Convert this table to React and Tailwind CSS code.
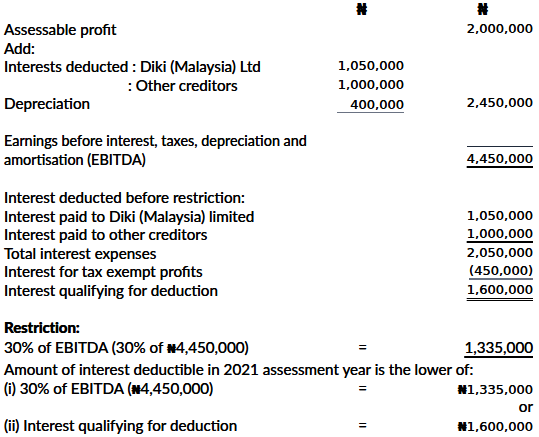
import React from "react";

const LF = "font-['Lato',sans-serif]";
const NF = "font-['DejaVu_Sans',sans-serif]";

function Row({ label, c1, c2, h = "h-[18.5px]", extra = "" }) {
  return (
    <div className={`flex items-start ${h} ${extra}`}>
      <div className="flex-1 whitespace-nowrap leading-[18.5px]">{label}</div>
      <div className="w-[100px] flex justify-end leading-[18.5px]">{c1}</div>
      <div className="w-[129px] flex justify-end leading-[18.5px]">{c2}</div>
    </div>
  );
}

const N = ({ children, cls = "" }) => (
  <span className={`${NF} text-[13px] ${cls}`}>{children}</span>
);

const Naira = ({ size = "text-[13px]" }) => (
  <span className={`${NF} font-bold ${size}`}>₦</span>
);

export default function App() {
  return (
    <div className={`w-[539px] h-[437px] bg-white text-black ${LF} text-[15.2px] pl-[4px] pr-[6px] overflow-hidden [text-shadow:0_0_0.3px_#000]`}>
      <div className="flex items-start h-[20px]">
        <div className="flex-1" />
        <div className="w-[100px] flex justify-end pr-[37px] leading-[20px]"><Naira size="text-[15px]" /></div>
        <div className="w-[129px] flex justify-end pr-[45px] leading-[20px]"><Naira size="text-[15px]" /></div>
      </div>
      <Row label="Assessable profit" c2={<N>2,000,000</N>} />
      <Row label="Add:" />
      <Row label="Interests deducted : Diki (Malaysia) Ltd" c1={<N>1,050,000</N>} />
      <Row label={<span className="pl-[124px]">: Other creditors</span>} c1={<N>1,000,000</N>} />
      <Row
        label="Depreciation"
        c1={<div className="w-[67px] text-right border-b-[1.5px] border-gray-500 h-[18.5px]"><N>400,000</N></div>}
        c2={<N>2,450,000</N>}
      />
      <div className="h-[18.5px]" />
      <Row
        label={<span className="text-[14.4px]">Earnings before interest, taxes, depreciation and</span>}
        c2={<div className="w-[66px] h-[16px] border-b border-gray-800" />}
      />
      <Row label={<span className="text-[14.4px]">amortisation (EBITDA)</span>} c2={<N cls="underline decoration-2 underline-offset-[3px]">4,450,000</N>} />
      <div className="h-[20px]" />
      <Row label="Interest deducted before restriction:" />
      <Row label="Interest paid to Diki (Malaysia) limited" c2={<N>1,050,000</N>} />
      <Row label="Interest paid to other creditors" c2={<N cls="underline decoration-2 underline-offset-[3px]">1,000,000</N>} />
      <Row label="Total interest expenses" c2={<N>2,050,000</N>} />
      <Row label="Interest for tax exempt profits" c2={<N cls="underline decoration-2 decoration-gray-500 underline-offset-[3px]">(450,000)</N>} />
      <Row label="Interest qualifying for deduction" c2={<N cls="underline decoration-double decoration-1 underline-offset-[4px]">1,600,000</N>} />
      <div className="h-[19px]" />
      <Row label={<span className="font-black tracking-[-0.2px]">Restriction:</span>} />
      <Row
        extra="mt-[1px]"
        label={<span>30% of EBITDA (30% of <Naira />4,450,000)</span>}
        c1={<span className="pr-[37px]">=</span>}
        c2={<span className="underline decoration-2 underline-offset-[3px]">1,335,000</span>}
      />
      <div className="h-[4px]" />
      <div className="h-[18.5px] leading-[18.5px] whitespace-nowrap">Amount of interest deductible in 2021 assessment year is the lower of:</div>
      <Row
        label={<span>(i) 30% of EBITDA (<Naira />4,450,000)</span>}
        c1={<span className="pr-[37px]">=</span>}
        c2={<span><Naira /><N>1,335,000</N></span>}
      />
      <Row c2={<span>or</span>} />
      <Row
        label="(ii) Interest qualifying for deduction"
        c1={<span className="pr-[37px]">=</span>}
        c2={<span><Naira /><N>1,600,000</N></span>}
      />
    </div>
  );
}
